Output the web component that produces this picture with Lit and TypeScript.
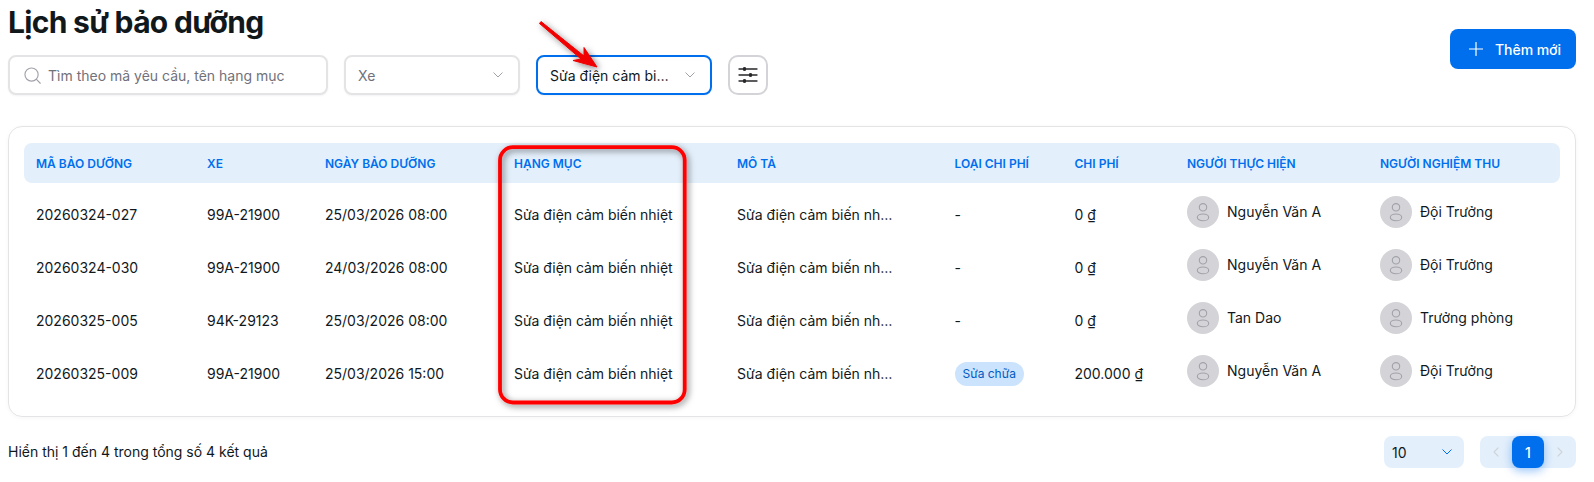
import { LitElement, html, css, svg } from "lit";
import { customElement } from "lit/decorators.js";

interface Row {
  code: string;
  car: string;
  date: string;
  kind: string;
  cost: string;
  doer: string;
  checker: string;
}

const ITEM = "Sửa điện cảm biến nhiệt";
const ROWS: Row[] = [
  { code: "20260324-027", car: "99A-21900", date: "25/03/2026 08:00", kind: "-", cost: "0 ₫", doer: "Nguyễn Văn A", checker: "Đội Trưởng" },
  { code: "20260324-030", car: "99A-21900", date: "24/03/2026 08:00", kind: "-", cost: "0 ₫", doer: "Nguyễn Văn A", checker: "Đội Trưởng" },
  { code: "20260325-005", car: "94K-29123", date: "25/03/2026 08:00", kind: "-", cost: "0 ₫", doer: "Tan Dao", checker: "Trưởng phòng" },
  { code: "20260325-009", car: "99A-21900", date: "25/03/2026 15:00", kind: "Sửa chữa", cost: "200.000 ₫", doer: "Nguyễn Văn A", checker: "Đội Trưởng" },
];
const HEADS = ["Mã bảo dưỡng", "Xe", "Ngày bảo dưỡng", "Hạng mục", "Mô tả", "Loại chi phí", "Chi phí", "Người thực hiện", "Người nghiệm thu"];

const chevron = (cls = "chev") => svg`<svg class=${cls} viewBox="0 0 10 6" fill="none" stroke="currentColor" stroke-width="1" stroke-linecap="round" stroke-linejoin="round"><path d="M.8.8 5 5l4.2-4.2"/></svg>`;

const person = svg`<svg class="person" viewBox="0 0 32 32" fill="none" stroke="#a1a1aa" stroke-width="1.100"><circle cx="16" cy="11.300" r="3.700"/><ellipse cx="16" cy="21.400" rx="5.700" ry="3.400"/></svg>`;

@customElement("app-root")
export class AppRoot extends LitElement {
  static styles = css`
    :host {
      display: block;
      position: relative;
      height: 482px;
      overflow: hidden;
      background: #fff;
      font-family: Inter, "Noto Sans", sans-serif;
      font-size: 14px;
      color: #11181c;
    }
    .page {
      padding: 0 18px 0 8px;
      display: flex;
      flex-direction: column;
    }
    .top {
      display: flex;
      justify-content: space-between;
      align-items: flex-start;
    }
    h1 {
      margin: 4px 0 0;
      font-size: 30px;
      line-height: 36px;
      font-weight: 700;
      letter-spacing: -0.7px;
    }
    .filters {
      display: flex;
      gap: 16px;
      margin-top: 15px;
      height: 40px;
    }
    .field {
      box-sizing: border-box;
      height: 40px;
      border: 2px solid #e4e4e7;
      border-radius: 8px;
      display: flex;
      align-items: center;
      padding: 0 12px;
      background: #fff;
      color: #71717a;
      box-shadow: 0 1px 2px rgba(0, 0, 0, 0.05);
    }
    .search { width: 320px; gap: 7px; padding: 0 12px 0 14px; }
    .search svg { width: 17px; height: 17px; flex: none; color: #a1a1aa; }
    .select { width: 176px; justify-content: space-between; padding-right: 15px; }
    .select.active { border-color: #006fee; color: #11181c; }
    .select .val { overflow: hidden; white-space: nowrap; text-overflow: ellipsis; width: 126px; }
    .chev { width: 10px; height: 6px; flex: none; color: #a1a1aa; }
    .tune {
      box-sizing: border-box;
      width: 40px;
      height: 40px;
      border: 2px solid #d4d4d8;
      border-radius: 10px;
      display: flex;
      align-items: center;
      justify-content: center;
      color: #27272a;
    }
    .tune svg { width: 20px; height: 20px; }
    .add {
      margin-top: 29px;
      box-sizing: border-box;
      width: 126px;
      height: 40px;
      border-radius: 8px;
      background: #006fee;
      color: #fff;
      display: flex;
      align-items: center;
      padding-left: 19px;
      gap: 12px;
      font-weight: 500;
      letter-spacing: -0.05px;
    }
    .add svg { width: 14px; height: 14px; flex: none; }
    .card {
      box-sizing: border-box;
      margin-top: 31px;
      height: 291px;
      border: 1px solid #e4e4e7;
      border-radius: 14px;
      box-shadow: 0 1px 4px rgba(0, 0, 0, 0.04);
      padding: 16px 15px;
    }
    .row {
      display: grid;
      grid-template-columns: 171px 118px 189px 223px 217.5px 120px 112.5px 193px 192px;
      align-items: center;
    }
    .row > * { padding: 0 12px; min-width: 0; }
    .head {
      height: 40px;
      background: #e3effb;
      border-radius: 8px;
      margin-bottom: 5px;
    }
    .head span {
      font-size: 12px;
      font-weight: 600;
      color: #006fee;
      text-transform: uppercase;
      white-space: nowrap;
    }
    .body { height: 53px; }
    .cell { white-space: nowrap; }
    .item { letter-spacing: -0.04px; }
    .desc div { width: 156px; overflow: hidden; text-overflow: ellipsis; }
    .chip {
      display: inline-flex;
      align-items: center;
      height: 24px;
      padding: 0 8px;
      border-radius: 12px;
      background: #cce3fd;
      color: #005bc4;
      font-size: 12px;
    }
    .user {
      display: flex;
      align-items: center;
      gap: 8px;
      margin-top: -6px;
    }
    .avatar {
      width: 32px;
      height: 32px;
      border-radius: 50%;
      background: #d4d4d8;
      flex: none;
    }
    .person { width: 32px; height: 32px; display: block; }
    .foot {
      display: flex;
      justify-content: space-between;
      align-items: center;
      margin-top: 19px;
    }
    .foot > span { margin-bottom: 2px; }
    .pageright { display: flex; gap: 16px; }
    .size {
      box-sizing: border-box;
      width: 80px;
      height: 32px;
      border-radius: 8px;
      background: #e3effb;
      display: flex;
      align-items: center;
      justify-content: space-between;
      padding: 0 12px 0 8px;
    }
    .size .chev { color: #006fee; }
    .pager {
      display: flex;
      height: 32px;
      border-radius: 8px;
      background: #e3effb;
    }
    .pg {
      width: 32px;
      height: 32px;
      display: flex;
      align-items: center;
      justify-content: center;
      color: #d0d5da;
    }
    .pg svg { width: 6px; height: 10px; }
    .pg.on {
      background: #006fee;
      color: #fff;
      border-radius: 8px;
      font-weight: 500;
      box-shadow: 0 3px 10px rgba(0, 111, 238, 0.4);
    }
    .marks {
      position: absolute;
      left: 0;
      top: 0;
      pointer-events: none;
    }
  `;

  render() {
    return html`
      <div class="page">
        <div class="top">
          <div>
            <h1>Lịch sử bảo dưỡng</h1>
            <div class="filters">
              <div class="field search">
                <svg viewBox="0 0 18 18" fill="none" stroke="currentColor" stroke-width="1.200" stroke-linecap="round"><circle cx="8" cy="8" r="7"/><path d="m13.200 13.200 4 4"/></svg>
                <span>Tìm theo mã yêu cầu, tên hạng mục</span>
              </div>
              <div class="field select"><span class="val">Xe</span>${chevron()}</div>
              <div class="field select active"><span class="val">Sửa điện cảm biến nhiệt</span>${chevron()}</div>
              <div class="tune">
                <svg viewBox="0 0 20 20" fill="none" stroke="currentColor" stroke-width="1.300" stroke-linecap="round">
                  <path d="M1 4h3.500M8.500 4h10.500M1 10h9.500M14.500 10h4.500M1 16h3.500M8.500 16h10.500"/>
                  <circle cx="6.500" cy="4" r="1.900" fill="currentColor" stroke="none"/>
                  <circle cx="12.500" cy="10" r="1.900" fill="currentColor" stroke="none"/>
                  <circle cx="6.500" cy="16" r="1.900" fill="currentColor" stroke="none"/>
                </svg>
              </div>
            </div>
          </div>
          <div class="add">
            <svg viewBox="0 0 14 14" fill="none" stroke="currentColor" stroke-width="1.200" stroke-linecap="round"><path d="M7 .5v13M.5 7h13"/></svg>
            <span>Thêm mới</span>
          </div>
        </div>

        <div class="card">
          <div class="row head">${HEADS.map((h) => html`<span>${h}</span>`)}</div>
          ${ROWS.map(
            (r) => html`
              <div class="row body">
                <div class="cell">${r.code}</div>
                <div class="cell">${r.car}</div>
                <div class="cell">${r.date}</div>
                <div class="cell item">${ITEM}</div>
                <div class="cell desc"><div>${ITEM}</div></div>
                <div class="cell">${r.kind === "-" ? "-" : html`<span class="chip">${r.kind}</span>`}</div>
                <div class="cell">${r.cost}</div>
                <div class="cell user"><span class="avatar">${person}</span><span>${r.doer}</span></div>
                <div class="cell user"><span class="avatar">${person}</span><span>${r.checker}</span></div>
              </div>
            `
          )}
        </div>

        <div class="foot">
          <span>Hiển thị 1 đến 4 trong tổng số 4 kết quả</span>
          <div class="pageright">
            <div class="size"><span>10</span>${chevron()}</div>
            <div class="pager">
              <div class="pg"><svg viewBox="0 0 6 10" fill="none" stroke="currentColor" stroke-width="1.200" stroke-linecap="round" stroke-linejoin="round"><path d="M5 1 1 5l4 4"/></svg></div>
              <div class="pg on">1</div>
              <div class="pg"><svg viewBox="0 0 6 10" fill="none" stroke="currentColor" stroke-width="1.200" stroke-linecap="round" stroke-linejoin="round"><path d="m1 1 4 4-4 4"/></svg></div>
            </div>
          </div>
        </div>
      </div>

      <svg class="marks" width="1594" height="482" viewBox="0 0 1594 482">
        <defs>
          <filter id="sh" x="-20%" y="-20%" width="140%" height="140%">
            <feDropShadow dx="2" dy="2" stdDeviation="3" flood-color="#000" flood-opacity="0.5"/>
          </filter>
        </defs>
        <g filter="url(#sh)">
          <rect x="500" y="147.200" width="184.700" height="255.300" rx="13" fill="none" stroke="#ff0000" stroke-width="3.800"/>
          <path d="M541 21.500 539.500 23.500 581 59 573 60.500 597 67 584 47.500 584 56Z" fill="#f00000" stroke="#f00000" stroke-width="1" stroke-linejoin="round"/>
        </g>
      </svg>
    `;
  }
}
